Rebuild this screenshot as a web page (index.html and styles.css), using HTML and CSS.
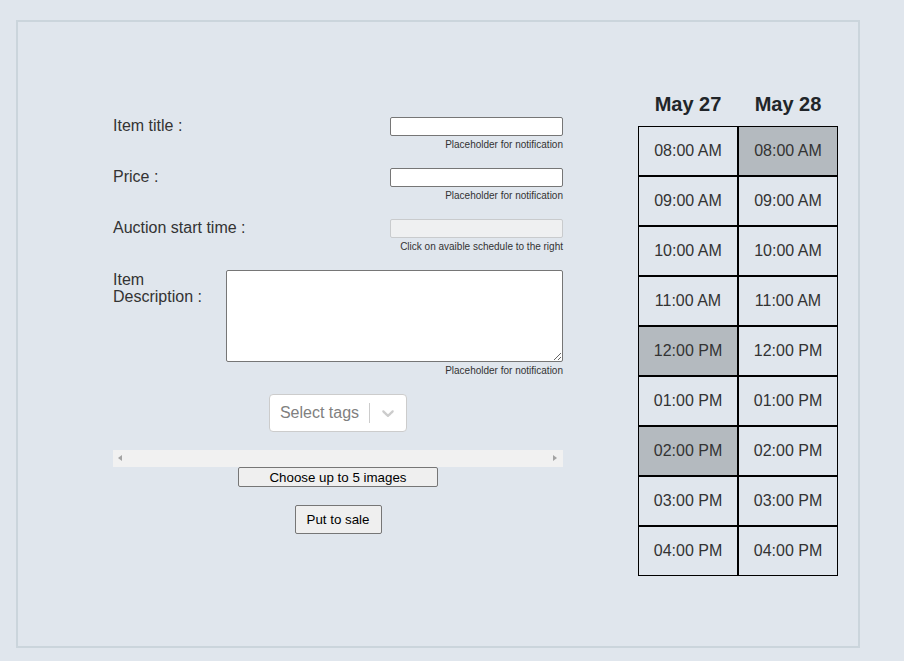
FILE: index.html
```html
<!DOCTYPE html>
<html lang="en">
<head>
<meta charset="utf-8">
<title>Put item to sale</title>
<link rel="stylesheet" href="styles.css">
</head>
<body>
<div class="frame">
  <form class="sale-form">
    <div class="field">
      <div class="field-row">
        <label class="field-label">Item title :</label>
        <input class="text-input" type="text">
      </div>
      <div class="note">Placeholder for notification</div>
    </div>
    <div class="field">
      <div class="field-row">
        <label class="field-label">Price :</label>
        <input class="text-input" type="text">
      </div>
      <div class="note">Placeholder for notification</div>
    </div>
    <div class="field">
      <div class="field-row">
        <label class="field-label">Auction start time :</label>
        <input class="text-input" type="text" disabled>
      </div>
      <div class="note">Click on avaible schedule to the right</div>
    </div>
    <div class="field">
      <div class="field-row">
        <label class="field-label desc-label">Item Description :</label>
        <textarea class="desc-input"></textarea>
      </div>
      <div class="note">Placeholder for notification</div>
    </div>
    <div class="tag-select">
      <div class="tag-value"><span class="tag-placeholder">Select tags</span></div>
      <span class="tag-separator"></span>
      <div class="tag-indicator">
        <svg width="20" height="20" viewBox="0 0 20 20" aria-hidden="true"><path fill="currentColor" d="M4.516 7.548c0.436-0.446 1.043-0.481 1.576 0l3.908 3.747 3.908-3.747c0.533-0.481 1.141-0.446 1.574 0 0.436 0.445 0.408 1.197 0 1.615-0.406 0.418-4.695 4.502-4.695 4.502-0.217 0.223-0.502 0.335-0.787 0.335s-0.57-0.112-0.789-0.335c0 0-4.287-4.084-4.695-4.502s-0.436-1.170 0-1.615z"/></svg>
      </div>
    </div>
    <div class="images">
      <div class="image-strip">
        <span class="arrow arrow-left"></span>
        <span class="arrow arrow-right"></span>
      </div>
      <button type="button" class="btn btn-choose">Choose up to 5 images</button>
    </div>
    <button type="button" class="btn btn-submit">Put to sale</button>
  </form>

  <table class="schedule">
    <thead>
      <tr><th>May 27</th><th>May 28</th></tr>
    </thead>
    <tbody>
      <tr><td>08:00 AM</td><td class="taken">08:00 AM</td></tr>
      <tr><td>09:00 AM</td><td>09:00 AM</td></tr>
      <tr><td>10:00 AM</td><td>10:00 AM</td></tr>
      <tr><td>11:00 AM</td><td>11:00 AM</td></tr>
      <tr><td class="taken">12:00 PM</td><td>12:00 PM</td></tr>
      <tr><td>01:00 PM</td><td>01:00 PM</td></tr>
      <tr><td class="taken">02:00 PM</td><td>02:00 PM</td></tr>
      <tr><td>03:00 PM</td><td>03:00 PM</td></tr>
      <tr><td>04:00 PM</td><td>04:00 PM</td></tr>
    </tbody>
  </table>
</div>
</body>
</html>
```

FILE: styles.css
```css
html, body {
  margin: 0;
  padding: 0;
  background: #e0e6ed;
}

body {
  font-family: "Liberation Sans", Arial, sans-serif;
  color: #333;
  padding: 20px 0 0 16px;
}

.frame {
  box-sizing: border-box;
  width: 844px;
  height: 628px;
  border: 2px solid #cbd5dc;
  display: flex;
  align-items: flex-start;
  gap: 75px;
  padding: 61px 0 0 95px;
}

.sale-form {
  width: 450px;
  margin: 34px 0 0 0;
  display: flex;
  flex-direction: column;
}

.field {
  display: flex;
  flex-direction: column;
  margin-bottom: 17px;
}

.field-row {
  display: flex;
  justify-content: space-between;
  align-items: flex-start;
}

.field-label {
  font-size: 16px;
  line-height: 18px;
  color: #333;
}

.desc-label {
  width: 100px;
  line-height: 17px;
  padding-top: 1px;
}

.text-input {
  box-sizing: border-box;
  width: 173px;
  height: 19px;
  margin: 0;
  padding: 1px 2px;
  border: 1px solid #767676;
  border-radius: 2px;
  background: #fff;
  font: 13px "Liberation Sans", Arial, sans-serif;
}

.text-input:disabled {
  background: #eff0f1;
  border-color: #c9cbcd;
}

.desc-input {
  box-sizing: border-box;
  width: 337px;
  height: 92px;
  margin: 0;
  padding: 2px;
  border: 1px solid #767676;
  border-radius: 2px;
  background: #fff;
  font: 13px "Liberation Mono", monospace;
}

.note {
  margin-top: 2px;
  font-size: 10px;
  line-height: 13px;
  text-align: right;
  color: #333;
}

.tag-select {
  align-self: center;
  box-sizing: border-box;
  height: 38px;
  margin-bottom: 18px;
  display: flex;
  align-items: center;
  background: #fff;
  border: 1px solid #ccc;
  border-radius: 4px;
}

.tag-value {
  padding: 2px 8px;
}

.tag-placeholder {
  margin: 0 2px;
  font-size: 16px;
  color: #808080;
}

.tag-separator {
  align-self: stretch;
  width: 1px;
  margin: 8px 0;
  background: #ccc;
}

.tag-indicator {
  display: flex;
  padding: 8px;
  color: #ccc;
}

.images {
  display: flex;
  flex-direction: column;
  align-items: center;
  margin-bottom: 18px;
}

.image-strip {
  position: relative;
  width: 450px;
  height: 17px;
  background: #f1f1f1;
}

.arrow {
  position: absolute;
  top: 5px;
  width: 0;
  height: 0;
  border-top: 3.5px solid transparent;
  border-bottom: 3.5px solid transparent;
}

.arrow-left {
  left: 5px;
  border-right: 4px solid #a3a3a3;
}

.arrow-right {
  right: 6px;
  border-left: 4px solid #a3a3a3;
}

.btn {
  box-sizing: border-box;
  margin: 0;
  font: 13.333px "Liberation Sans", Arial, sans-serif;
  color: #000;
  background: #efefef;
  border: 1px solid #767676;
  border-radius: 2px;
}

.btn-choose {
  width: 200px;
  height: 20px;
  padding: 0;
}

.btn-submit {
  align-self: center;
  width: 87px;
  height: 29px;
  padding: 0;
}

.schedule {
  border-collapse: separate;
  border-spacing: 0;
  flex: none;
}

.schedule th {
  padding: 10px 0;
  height: 23px;
  line-height: 23px;
  font-size: 20px;
  font-weight: bold;
  color: #212529;
  text-align: center;
}

.schedule td {
  box-sizing: border-box;
  width: 100px;
  height: 50px;
  padding: 0;
  border: 1px solid #000;
  text-align: center;
  font-size: 16px;
  color: #333;
}

.schedule td.taken {
  background: #b4babf;
}
```
